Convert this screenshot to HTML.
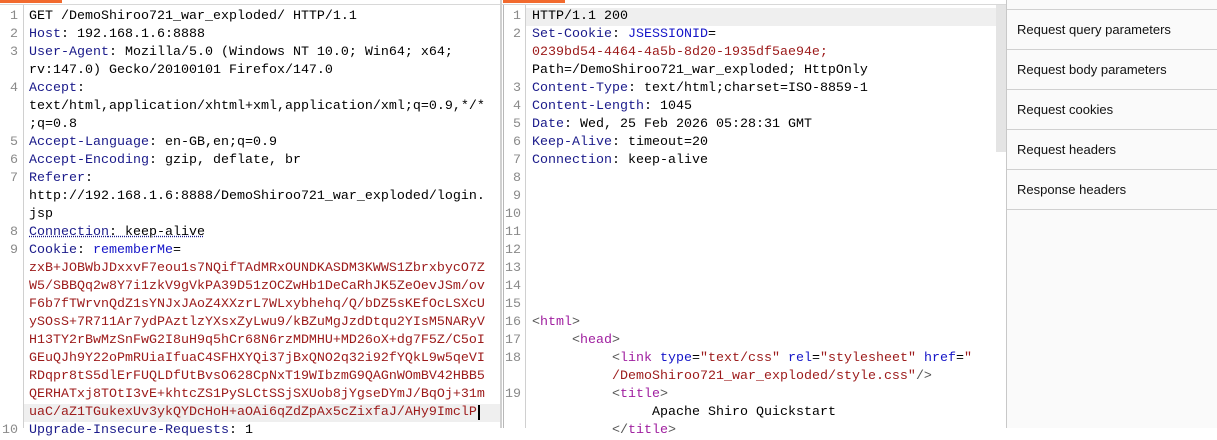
<!DOCTYPE html>
<html><head><meta charset="utf-8"><style>
body{margin:0;width:1217px;height:428px;overflow:hidden;background:#fff;position:relative;font-family:"Liberation Mono",monospace;font-size:13.33px}
.p{position:absolute;top:0;height:428px;overflow:hidden}
.r{position:absolute;height:18px;line-height:18px;white-space:pre}
.n{position:absolute;width:18px;text-align:right;color:#8a8a8a;height:18px;line-height:18px}
.k{color:#1a1a8a}.v{color:#9c1a1a}.b{color:#1515c8}.t{color:#a020a0}.g{color:#555}
.sb{position:absolute;left:1006px;top:0;width:211px;height:428px;background:#fafafa;border-left:1px solid #c8c8c8;font-family:"Liberation Sans",sans-serif;font-size:13px;color:#111}
.it{position:absolute;left:10px;height:40px;line-height:40px;width:200px}
.hl{position:absolute;top:9px;left:0;width:211px;height:1px;background:#d0d0d0}
</style></head><body>
<div style="position:absolute;left:0;top:0;width:62px;height:3px;background:#f26a2e"></div>
<div style="position:absolute;left:0;top:4px;width:1006px;height:1px;background:#d8d8d8"></div>
<div style="position:absolute;left:503px;top:0;width:62px;height:3px;background:#f26a2e"></div>
<div style="position:absolute;left:500px;top:0;width:2px;height:428px;background:#d0d0d0"></div>
<div style="position:absolute;left:23px;top:5px;width:1px;height:423px;background:#d0d0d0"></div>
<div style="position:absolute;left:525px;top:5px;width:1px;height:423px;background:#d0d0d0"></div>
<div style="position:absolute;left:503px;top:5px;width:1px;height:423px;background:#b8b8b8"></div>
<div style="position:absolute;left:24px;top:404px;width:476px;height:18px;background:#efefef"></div>
<div style="position:absolute;left:526px;top:8px;width:470px;height:18px;background:#efefef"></div>
<div style="position:absolute;left:996px;top:5px;width:10px;height:147px;background:#e4e4e4"></div>

<div class="n" style="left:0;top:8px">1</div><div class="r" style="left:29px;top:8px">GET /DemoShiroo721_war_exploded/ HTTP/1.1</div>
<div class="n" style="left:0;top:26px">2</div><div class="r" style="left:29px;top:26px"><span class="k">Host</span>: 192.168.1.6:8888</div>
<div class="n" style="left:0;top:44px">3</div><div class="r" style="left:29px;top:44px"><span class="k">User-Agent</span>: Mozilla/5.0 (Windows NT 10.0; Win64; x64;</div>
<div class="r" style="left:29px;top:62px">rv:147.0) Gecko/20100101 Firefox/147.0</div>
<div class="n" style="left:0;top:80px">4</div><div class="r" style="left:29px;top:80px"><span class="k">Accept</span>:</div>
<div class="r" style="left:29px;top:98px">text/html,application/xhtml+xml,application/xml;q=0.9,*/*</div>
<div class="r" style="left:29px;top:116px">;q=0.8</div>
<div class="n" style="left:0;top:134px">5</div><div class="r" style="left:29px;top:134px"><span class="k">Accept-Language</span>: en-GB,en;q=0.9</div>
<div class="n" style="left:0;top:152px">6</div><div class="r" style="left:29px;top:152px"><span class="k">Accept-Encoding</span>: gzip, deflate, br</div>
<div class="n" style="left:0;top:170px">7</div><div class="r" style="left:29px;top:170px"><span class="k">Referer</span>:</div>
<div class="r" style="left:29px;top:188px">http://192.168.1.6:8888/DemoShiroo721_war_exploded/login.</div>
<div class="r" style="left:29px;top:206px">jsp</div>
<div class="n" style="left:0;top:224px">8</div><div class="r" style="left:29px;top:224px;text-decoration:underline dotted #1a1a8a"><span class="k">Connection</span>: keep-alive</div>
<div class="n" style="left:0;top:242px">9</div><div class="r" style="left:29px;top:242px"><span class="k">Cookie</span>: <span class="b">rememberMe</span>=</div>
<div class="r v" style="left:29px;top:260px">zxB+JOBWbJDxxvF7eou1s7NQifTAdMRxOUNDKASDM3KWWS1ZbrxbycO7Z</div>
<div class="r v" style="left:29px;top:278px">W5/SBBQq2w8Y7i1zkV9gVkPA39D51zOCZwHb1DeCaRhJK5ZeOevJSm/ov</div>
<div class="r v" style="left:29px;top:296px">F6b7fTWrvnQdZ1sYNJxJAoZ4XXzrL7WLxybhehq/Q/bDZ5sKEfOcLSXcU</div>
<div class="r v" style="left:29px;top:314px">ySOsS+7R711Ar7ydPAztlzYXsxZyLwu9/kBZuMgJzdDtqu2YIsM5NARyV</div>
<div class="r v" style="left:29px;top:332px">H13TY2rBwMzSnFwG2I8uH9q5hCr68N6rzMDMHU+MD26oX+dg7F5Z/C5oI</div>
<div class="r v" style="left:29px;top:350px">GEuQJh9Y22oPmRUiaIfuaC4SFHXYQi37jBxQNO2q32i92fYQkL9w5qeVI</div>
<div class="r v" style="left:29px;top:368px">RDqpr8tS5dlErFUQLDfUtBvsO628CpNxT19WIbzmG9QAGnWOmBV42HBB5</div>
<div class="r v" style="left:29px;top:386px">QERHATxj8TOtI3vE+khtcZS1PySLCtSSjSXUob8jYgseDYmJ/BqOj+31m</div>
<div class="r v" style="left:29px;top:404px">uaC/aZ1TGukexUv3ykQYDcHoH+aOAi6qZdZpAx5cZixfaJ/AHy9ImclP<span style="border-left:2px solid #000;margin-left:1px"></span></div>
<div class="n" style="left:0;top:422px">10</div><div class="r" style="left:29px;top:422px"><span class="k">Upgrade-Insecure-Requests</span>: 1</div>

<div class="n" style="left:503px;top:8px">1</div><div class="r" style="left:532px;top:8px">HTTP/1.1 200</div>
<div class="n" style="left:503px;top:26px">2</div><div class="r" style="left:532px;top:26px"><span class="k">Set-Cookie</span>: <span class="b">JSESSIONID</span>=</div>
<div class="r v" style="left:532px;top:44px">0239bd54-4464-4a5b-8d20-1935df5ae94e;</div>
<div class="r" style="left:532px;top:62px">Path=/DemoShiroo721_war_exploded; HttpOnly</div>
<div class="n" style="left:503px;top:80px">3</div><div class="r" style="left:532px;top:80px"><span class="k">Content-Type</span>: text/html;charset=ISO-8859-1</div>
<div class="n" style="left:503px;top:98px">4</div><div class="r" style="left:532px;top:98px"><span class="k">Content-Length</span>: 1045</div>
<div class="n" style="left:503px;top:116px">5</div><div class="r" style="left:532px;top:116px"><span class="k">Date</span>: Wed, 25 Feb 2026 05:28:31 GMT</div>
<div class="n" style="left:503px;top:134px">6</div><div class="r" style="left:532px;top:134px"><span class="k">Keep-Alive</span>: timeout=20</div>
<div class="n" style="left:503px;top:152px">7</div><div class="r" style="left:532px;top:152px"><span class="k">Connection</span>: keep-alive</div>
<div class="n" style="left:503px;top:170px">8</div>
<div class="n" style="left:503px;top:188px">9</div>
<div class="n" style="left:503px;top:206px">10</div>
<div class="n" style="left:503px;top:224px">11</div>
<div class="n" style="left:503px;top:242px">12</div>
<div class="n" style="left:503px;top:260px">13</div>
<div class="n" style="left:503px;top:278px">14</div>
<div class="n" style="left:503px;top:296px">15</div>
<div class="n" style="left:503px;top:314px">16</div><div class="r" style="left:532px;top:314px"><span class="g">&lt;</span><span class="t">html</span><span class="g">&gt;</span></div>
<div class="n" style="left:503px;top:332px">17</div><div class="r" style="left:572px;top:332px"><span class="g">&lt;</span><span class="t">head</span><span class="g">&gt;</span></div>
<div class="n" style="left:503px;top:350px">18</div><div class="r" style="left:612px;top:350px"><span class="g">&lt;</span><span class="t">link</span> <span class="b">type</span>=<span class="v">"text/css"</span> <span class="b">rel</span>=<span class="v">"stylesheet"</span> <span class="b">href</span>=<span class="v">"</span></div>
<div class="r" style="left:612px;top:368px"><span class="v">/DemoShiroo721_war_exploded/style.css"</span><span class="g">/&gt;</span></div>
<div class="n" style="left:503px;top:386px">19</div><div class="r" style="left:612px;top:386px"><span class="g">&lt;</span><span class="t">title</span><span class="g">&gt;</span></div>
<div class="r" style="left:652px;top:404px">Apache Shiro Quickstart</div>
<div class="r" style="left:612px;top:422px"><span class="g">&lt;/</span><span class="t">title</span><span class="g">&gt;</span></div>

<div class="sb">
<div class="hl" style="top:9px"></div><div class="hl" style="top:49px"></div><div class="hl" style="top:89px"></div><div class="hl" style="top:129px"></div><div class="hl" style="top:169px"></div><div class="hl" style="top:209px"></div>
<div class="it" style="top:10px">Request query parameters</div>
<div class="it" style="top:50px">Request body parameters</div>
<div class="it" style="top:90px">Request cookies</div>
<div class="it" style="top:130px">Request headers</div>
<div class="it" style="top:170px">Response headers</div>
</div>
</body></html>
